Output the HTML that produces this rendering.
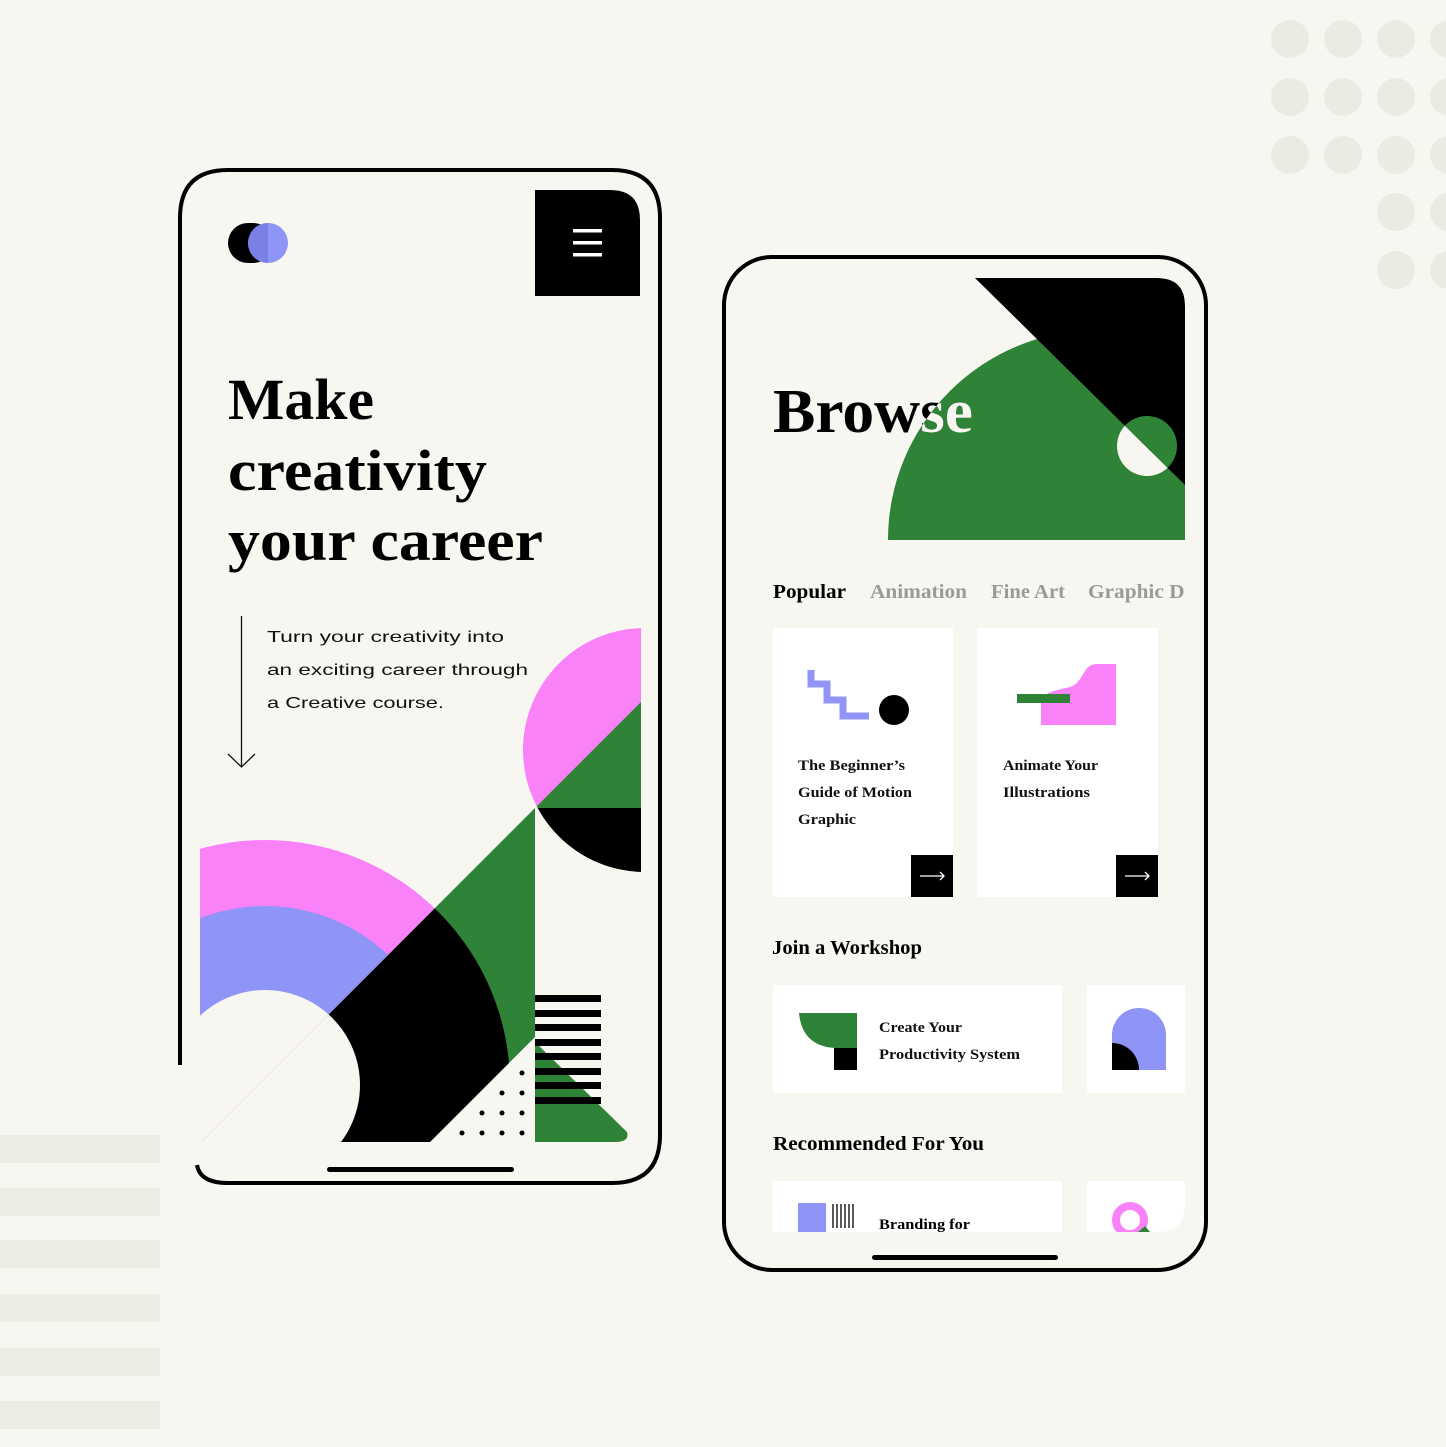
<!DOCTYPE html>
<html><head><meta charset="utf-8"><style>
html,body{margin:0;padding:0;background:#f7f6f0;}
svg{display:block;}
.s{font-family:"Liberation Serif",serif;font-weight:bold;}
.a{font-family:"Liberation Sans",sans-serif;}
</style></head><body>
<svg width="1446" height="1447" viewBox="0 0 1446 1447" xmlns="http://www.w3.org/2000/svg">
<defs>
<clipPath id="band"><polygon points="535,808 535,1037 430,1142 201,1142"/></clipPath>
<clipPath id="leftd"><polygon points="200,600 743,600 201,1142 200,1142"/></clipPath>
<clipPath id="scr1"><rect x="200" y="600" width="441" height="542"/></clipPath>
<clipPath id="pinkc"><rect x="500" y="600" width="141" height="208"/></clipPath>
<clipPath id="blkc"><rect x="500" y="808" width="141" height="120"/></clipPath>
<clipPath id="tri1"><polygon points="535,808 641,702 641,808"/></clipPath>
<clipPath id="scr2"><path d="M745 278 H1157 Q1185 278 1185 306 V1204 Q1185 1232 1157 1232 H745 Z"/></clipPath>
<clipPath id="gsemi"><rect x="870" y="278" width="315" height="262"/></clipPath>
<clipPath id="greenc"><circle cx="1098" cy="540" r="210"/></clipPath>
<clipPath id="belowd"><polygon points="975,278 1185,485 1185,560 700,560 700,278"/></clipPath>
<clipPath id="aboved"><polygon points="975,278 1185,278 1185,485"/></clipPath>
</defs>
<rect width="1446" height="1447" fill="#f7f6f0"/>
<g fill="#ebeae3">
<circle cx="1290" cy="39" r="19"/><circle cx="1343" cy="39" r="19"/><circle cx="1396" cy="39" r="19"/><circle cx="1449" cy="39" r="19"/>
<circle cx="1290" cy="97" r="19"/><circle cx="1343" cy="97" r="19"/><circle cx="1396" cy="97" r="19"/><circle cx="1449" cy="97" r="19"/>
<circle cx="1290" cy="155" r="19"/><circle cx="1343" cy="155" r="19"/><circle cx="1396" cy="155" r="19"/><circle cx="1449" cy="155" r="19"/>
<circle cx="1396" cy="212" r="19"/><circle cx="1449" cy="212" r="19"/>
<circle cx="1396" cy="270" r="19"/><circle cx="1449" cy="270" r="19"/>
</g>
<g fill="#ecebe4">
<rect x="0" y="1135" width="160" height="28"/><rect x="0" y="1188" width="160" height="28"/><rect x="0" y="1240" width="160" height="28"/>
<rect x="0" y="1294" width="160" height="28"/><rect x="0" y="1348" width="160" height="28"/><rect x="0" y="1401" width="160" height="28"/>
</g>

<!-- PHONE 1 -->
<path d="M180 1065 V218 Q180 170 228 170 H612 Q660 170 660 218 V1135 Q660 1183 612 1183 H228 Q200 1183 197 1165" fill="none" stroke="#000" stroke-width="4"/>
<path d="M535 190 H610 Q640 190 640 220 V296 H535 Z" fill="#000"/>
<rect x="573" y="229" width="29" height="3.5" fill="#fff"/><rect x="573" y="241" width="29" height="3.5" fill="#fff"/><rect x="573" y="253" width="29" height="3.5" fill="#fff"/>
<rect x="228" y="223" width="45" height="40" rx="20" fill="#000"/>
<circle cx="268" cy="243" r="20" fill="#8f94f7"/>
<path d="M268 223 A20 20 0 0 0 268 263 Z" fill="#7b80e6"/>
<text class="s" x="228" y="419" font-size="58" textLength="146" lengthAdjust="spacingAndGlyphs">Make</text>
<text class="s" x="228" y="490" font-size="58" textLength="259" lengthAdjust="spacingAndGlyphs">creativity</text>
<text class="s" x="228" y="560" font-size="58" textLength="315" lengthAdjust="spacingAndGlyphs">your career</text>
<g class="a" font-size="16" fill="#111">
<text x="267" y="642" textLength="237" lengthAdjust="spacingAndGlyphs">Turn your creativity into</text>
<text x="267" y="675" textLength="261" lengthAdjust="spacingAndGlyphs">an exciting career through</text>
<text x="267" y="708" textLength="177" lengthAdjust="spacingAndGlyphs">a Creative course.</text>
</g>
<line x1="241.5" y1="616" x2="241.5" y2="767" stroke="#111" stroke-width="1.3"/>
<path d="M228 754 L241.5 767 L255 754" fill="none" stroke="#111" stroke-width="1.3"/>

<g clip-path="url(#scr1)">
<g clip-path="url(#pinkc)"><circle cx="645" cy="750" r="122" fill="#fa82f8"/></g>
<g clip-path="url(#tri1)"><circle cx="645" cy="750" r="122" fill="#2f8336"/></g>
<g clip-path="url(#blkc)"><circle cx="645" cy="750" r="122" fill="#000"/></g>
<polygon points="535,808 535,1037 430,1142 201,1142" fill="#2f8336"/>
<g clip-path="url(#band)">
<circle cx="265" cy="1085" r="245" fill="#000"/>
<circle cx="265" cy="1085" r="95" fill="#f7f6f0"/>
</g>
<g clip-path="url(#leftd)">
<circle cx="265" cy="1085" r="245" fill="#fa82f8"/>
<circle cx="265" cy="1085" r="179" fill="#8f94f7"/>
<circle cx="265" cy="1085" r="95" fill="#f7f6f0"/>
</g>
<path d="M535 1042 L627 1132 Q630 1142 615 1142 L535 1142 Z" fill="#2f8336"/>
<g fill="#000">
<rect x="535" y="995" width="66" height="7"/><rect x="535" y="1010" width="66" height="7"/><rect x="535" y="1024" width="66" height="7"/>
<rect x="535" y="1039" width="66" height="7"/><rect x="535" y="1053" width="66" height="7"/><rect x="535" y="1068" width="66" height="7"/>
<rect x="535" y="1082" width="66" height="7"/><rect x="535" y="1097" width="66" height="7"/>
</g>
<g fill="#000">
<circle cx="522" cy="1073" r="2.5"/>
<circle cx="502" cy="1093" r="2.5"/><circle cx="522" cy="1093" r="2.5"/>
<circle cx="482" cy="1113" r="2.5"/><circle cx="502" cy="1113" r="2.5"/><circle cx="522" cy="1113" r="2.5"/>
<circle cx="462" cy="1133" r="2.5"/><circle cx="482" cy="1133" r="2.5"/><circle cx="502" cy="1133" r="2.5"/><circle cx="522" cy="1133" r="2.5"/>
</g>
</g>
<rect x="327" y="1167" width="187" height="5" rx="2.5" fill="#000"/>

<!-- PHONE 2 -->
<rect x="724" y="257" width="482" height="1013" rx="48" fill="none" stroke="#000" stroke-width="4"/>
<g clip-path="url(#scr2)">
<g clip-path="url(#gsemi)"><circle cx="1098" cy="540" r="210" fill="#2f8336"/></g>
<path d="M975 278 H1157 Q1185 278 1185 306 V485 Z" fill="#000"/>
<g clip-path="url(#belowd)"><circle cx="1147" cy="446" r="30" fill="#f7f6f0"/></g>
<g clip-path="url(#aboved)"><circle cx="1147" cy="446" r="30" fill="#2f8336"/></g>
<text class="s" x="773" y="432" font-size="62" textLength="200" lengthAdjust="spacingAndGlyphs" fill="#000">Browse</text>
<g clip-path="url(#greenc)"><g clip-path="url(#gsemi)"><text class="s" x="773" y="432" font-size="62" textLength="200" lengthAdjust="spacingAndGlyphs" fill="#f7f6f0">Browse</text></g></g>
<g class="s" font-size="20">
<text x="773" y="598" fill="#000" textLength="73" lengthAdjust="spacingAndGlyphs">Popular</text>
<text x="870" y="598" fill="#9a9a96" textLength="97" lengthAdjust="spacingAndGlyphs">Animation</text>
<text x="991" y="598" fill="#9a9a96" textLength="74" lengthAdjust="spacingAndGlyphs">Fine Art</text>
<text x="1088" y="598" fill="#9a9a96" textLength="106" lengthAdjust="spacingAndGlyphs">Graphic De</text>
</g>
<rect x="773" y="628" width="180" height="269" fill="#fff"/>
<rect x="977" y="628" width="181" height="269" fill="#fff"/>
<polyline points="811,670 811,684 827,684 827,700 843,700 843,716 869,716" fill="none" stroke="#8f94f7" stroke-width="7"/>
<circle cx="894" cy="710" r="15" fill="#000"/>
<path d="M1041 725 L1041 702 C1042 692 1058 690 1070 687 C1084 683 1082 664 1097 664 L1116 664 L1116 725 Z" fill="#fa82f8"/>
<rect x="1017" y="694" width="53" height="9" fill="#2f8336"/>
<g class="s" font-size="15" fill="#111">
<text x="798" y="770" textLength="107" lengthAdjust="spacingAndGlyphs">The Beginner’s</text>
<text x="798" y="797" textLength="114" lengthAdjust="spacingAndGlyphs">Guide of Motion</text>
<text x="798" y="824" textLength="58" lengthAdjust="spacingAndGlyphs">Graphic</text>
<text x="1003" y="770" textLength="95" lengthAdjust="spacingAndGlyphs">Animate Your</text>
<text x="1003" y="797" textLength="87" lengthAdjust="spacingAndGlyphs">Illustrations</text>
</g>
<rect x="911" y="855" width="42" height="42" fill="#000"/>
<rect x="1116" y="855" width="42" height="42" fill="#000"/>
<path d="M920 876 H944 M940 872 L944 876 L940 880" stroke="#fff" stroke-width="1.3" fill="none"/>
<path d="M1125 876 H1149 M1145 872 L1149 876 L1145 880" stroke="#fff" stroke-width="1.3" fill="none"/>
<text class="s" x="772" y="954" font-size="20" textLength="150" lengthAdjust="spacingAndGlyphs">Join a Workshop</text>
<rect x="773" y="985" width="289" height="108" fill="#fff"/>
<rect x="1087" y="985" width="110" height="108" fill="#fff"/>
<path d="M799 1013 H857 V1048 H835 Q802 1046 799 1013 Z" fill="#2f8336"/>
<rect x="834" y="1048" width="23" height="22" fill="#000"/>
<g class="s" font-size="15" fill="#111">
<text x="879" y="1032" textLength="83" lengthAdjust="spacingAndGlyphs">Create Your</text>
<text x="879" y="1059" textLength="141" lengthAdjust="spacingAndGlyphs">Productivity System</text>
</g>
<path d="M1112 1070 V1035 A27 27 0 0 1 1166 1035 V1070 Z" fill="#8f94f7"/>
<path d="M1112 1043 A27 27 0 0 1 1139 1070 H1112 Z" fill="#000"/>
<text class="s" x="773" y="1150" font-size="20" textLength="211" lengthAdjust="spacingAndGlyphs">Recommended For You</text>
<rect x="773" y="1181" width="289" height="60" fill="#fff"/>
<rect x="1087" y="1181" width="110" height="60" fill="#fff"/>
<rect x="798" y="1203" width="28" height="30" fill="#8f94f7"/>
<g stroke="#000" stroke-width="1.3">
<line x1="833" y1="1204" x2="833" y2="1228"/><line x1="837" y1="1204" x2="837" y2="1228"/><line x1="841" y1="1204" x2="841" y2="1228"/>
<line x1="845" y1="1204" x2="845" y2="1228"/><line x1="849" y1="1204" x2="849" y2="1228"/><line x1="853" y1="1204" x2="853" y2="1228"/>
</g>
<text class="s" x="879" y="1229" font-size="15" textLength="91" lengthAdjust="spacingAndGlyphs">Branding for</text>
<circle cx="1130" cy="1220" r="14" fill="none" stroke="#fa82f8" stroke-width="8"/>
<path d="M1138 1232 L1145 1226 L1150 1232 Z" fill="#2f8336"/>
</g>
<rect x="872" y="1255" width="186" height="5" rx="2.5" fill="#000"/>
</svg>
</body></html>
